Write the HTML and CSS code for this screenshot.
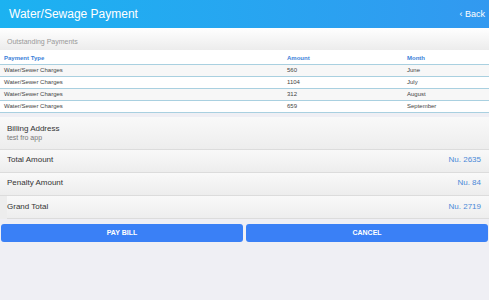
FILE: index.html
```html
<!DOCTYPE html>
<html lang="en">
<head>
    <meta charset="UTF-8">
    <meta name="viewport" content="width=device-width, initial-scale=1.0">
    <title>Water/Sewage Payment</title>

    <link rel="stylesheet" href="styles.css">
</head>
<body>
    <header class="topbar">
        <h1>Water/Sewage Payment</h1>
        <a href="#" class="back">&lsaquo; Back</a>
    </header>

    <div class="section-title">Outstanding Payments</div>

    <table class="payments">
        <thead>
            <tr>
                <th>Payment Type</th>
                <th>Amount</th>
                <th>Month</th>
            </tr>
        </thead>
        <tbody>
            <tr><td>Water/Sewer Charges</td><td>560</td><td>June</td></tr>
            <tr><td>Water/Sewer Charges</td><td>1104</td><td>July</td></tr>
            <tr><td>Water/Sewer Charges</td><td>312</td><td>August</td></tr>
            <tr><td>Water/Sewer Charges</td><td>659</td><td>September</td></tr>
        </tbody>
    </table>

    <div class="address">
        <div class="label">Billing Address</div>
        <div class="sub">test fro app</div>
    </div>

    <div class="totals">
        <div class="row"><span>Total Amount</span><span class="amount">Nu. 2635</span></div>
        <div class="row"><span>Penalty Amount</span><span class="amount">Nu. 84</span></div>
        <div class="row"><span>Grand Total</span><span class="amount">Nu. 2719</span></div>
    </div>

    <div class="actions">
        <button>PAY BILL</button>
        <button>CANCEL</button>
    </div>
</body>
</html>
```

FILE: styles.css
```css
* {
    font-family: "Liberation Sans", Arial, Helvetica, sans-serif;
    margin: 0;
    padding: 0;
    box-sizing: border-box;
}

body {
    background-color: #efeff4;
    width: 489px;
    height: 300px;
    overflow: hidden;
}

/* Top Bar */
.topbar {
    height: 28px;
    background: linear-gradient(to right, #1cb2f1, #3299f0);
    display: flex;
    align-items: center;
    justify-content: space-between;
    padding: 0 4px 0 9px;
}

.topbar h1 {
    color: white;
    font-size: 12px;
    font-weight: normal;
}

.topbar .back {
    color: white;
    text-decoration: none;
    font-size: 9px;
}

/* Outstanding Payments */
.section-title {
    height: 22px;
    padding: 10px 0 0 7px;
    font-size: 7px;
    color: #999;
    background: linear-gradient(to bottom, #ffffff, #ececec);
}

.payments {
    width: 100%;
    border-collapse: collapse;
    background-color: white;
    font-size: 6px;
    color: #444;
}

.payments th {
    color: #3b7fd9;
    text-align: left;
    font-weight: bold;
    height: 14px;
    padding: 3px 0 0 4px;
    border-bottom: 1px solid #a9d0e0;
}

.payments td {
    height: 12px;
    padding: 0 0 0 4px;
    border-bottom: 1px solid #a9d0e0;
}

.payments tbody tr:nth-child(odd) {
    background-color: #f7f7f7;
}

.payments th:nth-child(1), .payments td:nth-child(1) { width: 283px; }
.payments th:nth-child(2), .payments td:nth-child(2) { width: 120px; }

/* Billing Address */
.address {
    margin-top: 4px;
    height: 33px;
    padding: 7px 0 0 7px;
    background: linear-gradient(to bottom, #f9f9f9, #ededed);
    border-bottom: 1px solid #dcdcdc;
}

.address .label {
    font-size: 8px;
    color: #333;
}

.address .sub {
    font-size: 7px;
    color: #777;
    margin-top: 1px;
}

/* Totals */
.totals .row {
    height: 23px;
    display: flex;
    justify-content: space-between;
    align-items: center;
    padding: 0 8px 2px 7px;
    font-size: 8px;
    color: #333;
    background: linear-gradient(to bottom, #f9f9f9, #ededed);
    border-bottom: 1px solid #dcdcdc;
}

.totals .row:last-child {
    border-bottom: none;
    box-shadow: inset 8px -1px 0 -1px #ededed, inset 0 -1px 0 #dcdcdc;
}

.totals .amount {
    color: #4a8ad8;
}

/* Buttons */
.actions {
    display: flex;
    gap: 3px;
    padding: 5px 1px 0;
}

.actions button {
    flex: 1;
    height: 18px;
    border: none;
    border-radius: 3px;
    background-color: #3a80f6;
    color: white;
    font-size: 7px;
    font-weight: bold;
}
```
